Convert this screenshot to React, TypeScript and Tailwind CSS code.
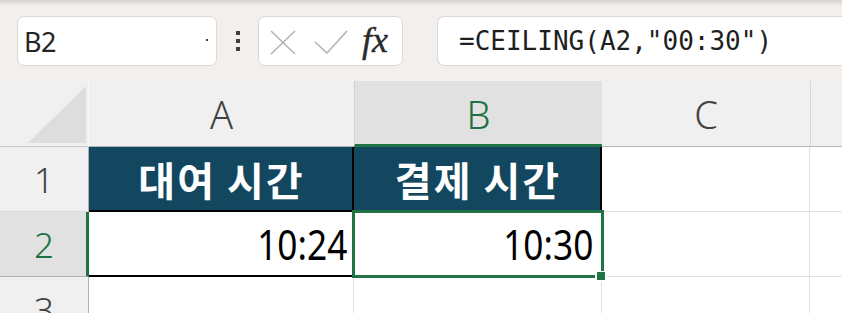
import React from "react";

const sans = { fontFamily: '"Noto Sans", "Open Sans", sans-serif' };
const kr = { fontFamily: '"Noto Sans CJK KR", "Noto Sans", sans-serif' };

export default function App() {
  return (
    <div className="w-[842px] h-[313px] overflow-hidden bg-white relative" style={sans}>
      {/* Toolbar */}
      <div className="h-[81px] bg-[#f3efed] relative flex items-start pt-[16px]">
        <div className="absolute left-0 right-0 top-0 h-[6px] bg-gradient-to-b from-[#d6d2d0] to-[#f3efed]" />
        <div className="ml-[17px] w-[200px] h-[50px] bg-white border border-[#dcd8d6] rounded-[7px] flex items-center pl-[6px] relative">
          <span className="text-[27px] leading-none text-[#242424] tracking-[-0.5px]">B2</span>
          <div className="absolute top-[22px] w-[2px] h-[2px] bg-[#444]" style={{ left: 188 }} />
        </div>
        <div className="w-[19px] ml-[19px] h-[50px] flex flex-col items-start justify-start pt-[15px] gap-[4px]">
          <div className="w-[4px] h-[4px] bg-[#404040]" />
          <div className="w-[4px] h-[4px] bg-[#404040]" />
          <div className="w-[4px] h-[4px] bg-[#404040]" />
        </div>
        <div className="ml-[3px] w-[145px] h-[50px] bg-white border border-[#dcd8d6] rounded-[7px] flex items-center relative">
          <svg className="absolute left-[11px] top-[13px]" width="26" height="25" viewBox="0 0 26 25">
            <path d="M1 1 L25 24 M25 1 L1 24" stroke="#b4b4b4" strokeWidth="1.6" fill="none" />
          </svg>
          <svg className="absolute left-[55px] top-[13px]" width="34" height="24" viewBox="0 0 34 24">
            <path d="M1 12 L13 23 L33 1" stroke="#b4b4b4" strokeWidth="1.6" fill="none" />
          </svg>
          <span
            className="absolute left-[103px] top-[1px] text-[36px] leading-[44px] italic text-[#2a2a2a]"
            style={{ fontFamily: '"Liberation Serif", "DejaVu Serif", serif', WebkitTextStroke: "0.4px #2a2a2a" }}
          >
            fx
          </span>
        </div>
        <div className="ml-[34px] flex-1 h-[50px] bg-white border border-[#dcd8d6] border-r-0 rounded-l-[7px] flex items-center pl-[21px]">
          <span
            className="text-[26px] leading-none text-[#1f1f1f] whitespace-pre"
            style={{ fontFamily: '"DejaVu Sans Mono", "Liberation Mono", monospace' }}
          >
            =CEILING(A2,"00:30")
          </span>
        </div>
      </div>

      {/* Column header row */}
      <div className="flex h-[66px]">
        <div className="w-[89px] shrink-0 bg-[#f0f0f0] border-b border-[#c6c6c6] border-r border-r-[#fafafa] relative">
          <svg className="absolute left-[28px] top-[5px]" width="58" height="57" viewBox="0 0 58 57">
            <polygon points="0,57 58,0 58,57" fill="#dddddd" />
          </svg>
        </div>
        <div className="w-[265px] shrink-0 bg-[#f0f0f0] border-b border-[#b4b4b4] flex items-center justify-center">
          <span className="text-[38px] leading-none text-[#424242] font-light">A</span>
        </div>
        <div className="w-[248px] shrink-0 bg-[#e1e1e1] border-l border-[#d0d0d0] border-b-[3px] border-b-[#217346] flex items-center justify-center">
          <span className="text-[38px] leading-none text-[#1e7145] font-light mt-[2px]">B</span>
        </div>
        <div className="w-[208px] shrink-0 bg-[#f0f0f0] border-b border-[#b4b4b4] flex items-center justify-center">
          <span className="text-[38px] leading-none text-[#424242] font-light">C</span>
        </div>
        <div className="flex-1 bg-[#f0f0f0] border-b border-[#b4b4b4] border-l border-l-[#d6d6d6]" />
      </div>

      {/* Row 1 */}
      <div className="flex h-[65px]">
        <div className="w-[89px] shrink-0 bg-[#f0f0f0] border-r border-[#b0b0b0] border-b border-b-[#dadada] flex items-center justify-center">
          <span className="text-[35px] leading-none text-[#424242] font-light">1</span>
        </div>
        <div className="w-[265px] shrink-0 bg-[#12475f] border-r-2 border-b-2 border-black flex items-center justify-center">
          <span className="text-[40px] leading-none text-white font-bold tracking-[2px] ml-[2px]" style={kr}>
            대여 시간
          </span>
        </div>
        <div className="w-[248px] shrink-0 bg-[#12475f] border-r-2 border-b-2 border-black flex items-center justify-center">
          <span className="text-[40px] leading-none text-white font-bold tracking-[2px] ml-[2px]" style={kr}>
            결제 시간
          </span>
        </div>
        <div className="w-[208px] shrink-0 border-b border-r border-[#e1e1e1]" />
        <div className="flex-1 border-b border-[#e1e1e1]" />
      </div>

      {/* Row 2 */}
      <div className="flex h-[65px]">
        <div className="w-[89px] shrink-0 bg-[#e1e1e1] border-r-[3px] border-[#217346] border-b border-b-[#b0b0b0] flex items-center justify-center">
          <span className="text-[35px] leading-none text-[#1e7145] font-light ml-[2px]">2</span>
        </div>
        <div className="w-[265px] shrink-0 border-b-2 border-black flex items-center justify-end pr-[7px]">
          <span className="inline-block text-[42px] leading-none text-black scale-x-[0.84] origin-right">
            10:24
          </span>
        </div>
        <div className="w-[248px] shrink-0 border-b border-r border-[#e1e1e1] flex items-center justify-end pr-[8px]">
          <span className="inline-block text-[42px] leading-none text-black scale-x-[0.84] origin-right">
            10:30
          </span>
        </div>
        <div className="w-[208px] shrink-0 border-b border-r border-[#e1e1e1]" />
        <div className="flex-1 border-b border-[#e1e1e1]" />
      </div>

      {/* Row 3 */}
      <div className="flex h-[40px]">
        <div className="w-[89px] shrink-0 bg-[#f0f0f0] border-r border-[#b0b0b0] flex items-start justify-center pt-[15px]">
          <span className="text-[35px] leading-none text-[#424242] font-light">3</span>
        </div>
        <div className="w-[265px] shrink-0 border-r border-[#e1e1e1]" />
        <div className="w-[248px] shrink-0 border-r border-[#e1e1e1]" />
        <div className="w-[208px] shrink-0 border-r border-[#e1e1e1]" />
        <div className="flex-1" />
      </div>

      {/* Selection overlay */}
      <div className="absolute left-[352px] top-[210px] w-[252px] h-[68px] border-[3px] border-[#217346] pointer-events-none" />
      <div className="absolute left-[595px] top-[271px] w-[11px] h-[11px] bg-white pointer-events-none" />
      <div className="absolute left-[597px] top-[272px] w-[8px] h-[8px] bg-[#217346] pointer-events-none" />
    </div>
  );
}
